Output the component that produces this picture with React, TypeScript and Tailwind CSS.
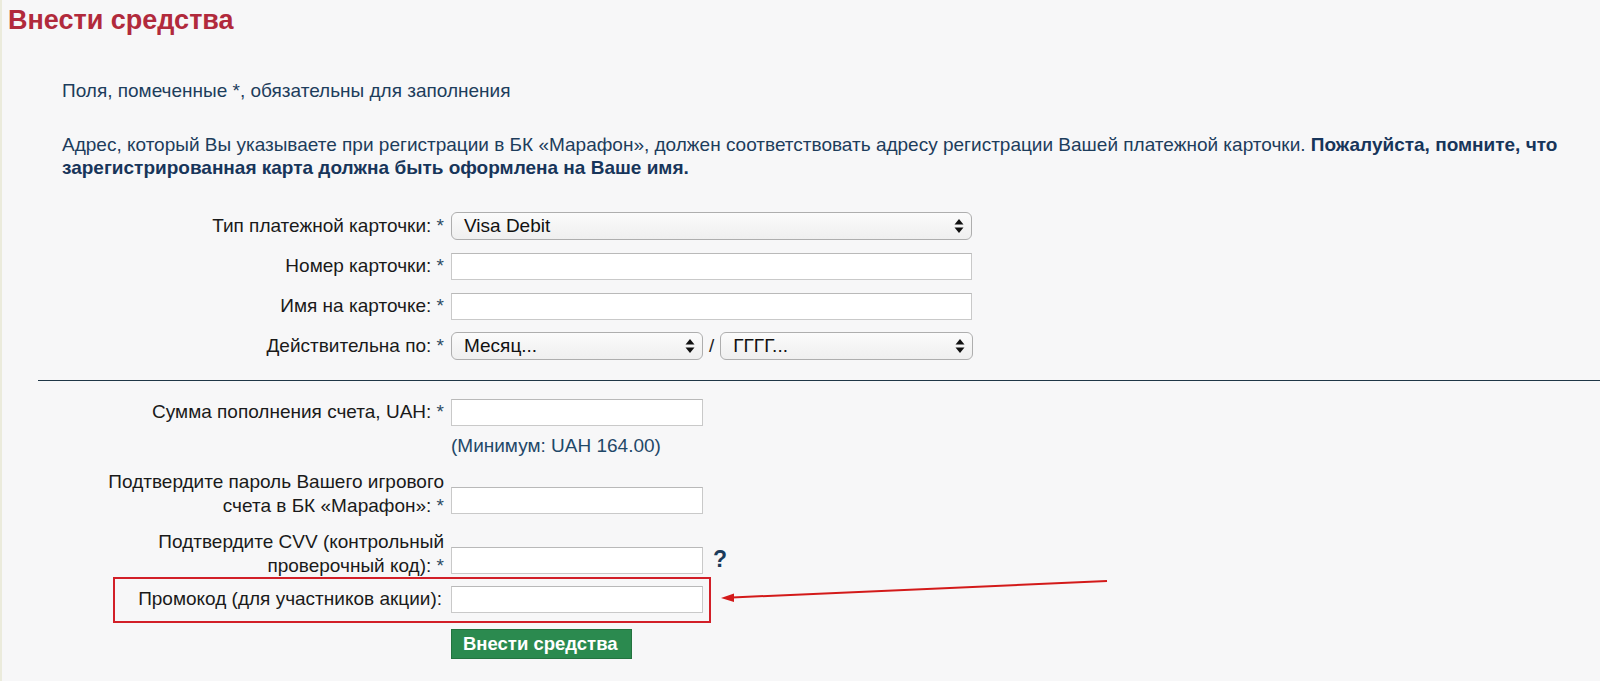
import React from "react";

const FONT = { fontFamily: '"Liberation Sans", Arial, Helvetica, sans-serif' };

function Star() {
  return <span className="text-[#2c4a63]"> *</span>;
}

function Arrows() {
  return (
    <svg width="10" height="16" viewBox="0 0 10 16" className="shrink-0">
      <path d="M5 1 L9.5 6.5 H0.5 Z" fill="#111" />
      <path d="M5 15 L9.5 9.5 H0.5 Z" fill="#111" />
    </svg>
  );
}

function FakeSelect({ value, width }: { value: string; width: string }) {
  return (
    <div
      className={`${width} h-[28px] flex items-center justify-between pl-[12px] pr-[7px] rounded-[6px] border border-[#aeaeae] bg-gradient-to-b from-[#fbfbfb] to-[#efefef] text-[19px] text-[#111]`}
    >
      <span>{value}</span>
      <Arrows />
    </div>
  );
}

function TextInput({ width, className = "" }: { width: string; className?: string }) {
  return (
    <input
      type="text"
      className={`${width} h-[27px] bg-white border border-[#c9c9c9] border-t-[#b9b9b9] outline-none ${className}`}
    />
  );
}

export default function App() {
  return (
    <div
      className="relative h-[681px] w-[1600px] overflow-hidden bg-[#f7f7f8] border-l-2 border-[#ebebdc]"
      style={FONT}
    >
      <h1 className="mt-[5px] pl-[6px] text-[27px] font-bold leading-[30px] text-[#b12a3c]">
        Внести средства
      </h1>

      <p className="mt-[44px] pl-[60px] text-[19px] leading-[23px] text-[#1d3d5c]">
        Поля, помеченные *, обязательны для заполнения
      </p>

      <p className="mt-[31px] pl-[60px] text-[19px] leading-[23px] text-[#1d3d5c] whitespace-nowrap">
        Адрес, который Вы указываете при регистрации в БК «Марафон», должен соответствовать адресу регистрации Вашей платежной карточки.{" "}
        <b className="text-[#17355a]">Пожалуйста, помните, что</b>
        <br />
        <b className="text-[#17355a]">зарегистрированная карта должна быть оформлена на Ваше имя.</b>
      </p>

      {/* card block */}
      <div className="mt-[33px] flex flex-col gap-[12px] text-[19px] text-[#1a1a1a]">
        <div className="flex items-center h-[28px]">
          <label className="w-[442px] text-right">
            Тип платежной карточки:<Star />
          </label>
          <div className="ml-[7px]">
            <FakeSelect value="Visa Debit" width="w-[521px]" />
          </div>
        </div>
        <div className="flex items-center h-[28px]">
          <label className="w-[442px] text-right">
            Номер карточки:<Star />
          </label>
          <TextInput width="w-[521px]" className="ml-[7px]" />
        </div>
        <div className="flex items-center h-[28px]">
          <label className="w-[442px] text-right">
            Имя на карточке:<Star />
          </label>
          <TextInput width="w-[521px]" className="ml-[7px]" />
        </div>
        <div className="flex items-center h-[28px]">
          <label className="w-[442px] text-right">
            Действительна по:<Star />
          </label>
          <div className="ml-[7px] flex items-center">
            <FakeSelect value="Месяц..." width="w-[252px]" />
            <span className="mx-[6px] text-[#222]">/</span>
            <FakeSelect value="ГГГГ..." width="w-[253px]" />
          </div>
        </div>
      </div>

      <div className="mt-[20px] ml-[36px] border-t-[1.5px] border-[#1f3646]" />

      {/* deposit block */}
      <div className="text-[19px] text-[#1a1a1a]">
        <div className="mt-[18px] flex items-center h-[27px]">
          <label className="w-[442px] text-right">
            Сумма пополнения счета, UAH:<Star />
          </label>
          <TextInput width="w-[252px]" className="ml-[7px]" />
        </div>
        <div className="mt-[8px] pl-[449px] leading-[23px] text-[#1f4868]">
          (Минимум: UAH 164.00)
        </div>

        <div className="mt-[13px] flex items-end">
          <label className="w-[442px] text-right leading-[23.5px]">
            Подтвердите пароль Вашего игрового
            <br />
            счета в БК «Марафон»:<Star />
          </label>
          <TextInput width="w-[252px]" className="ml-[7px] mb-[3px]" />
        </div>

        <div className="mt-[13px] flex items-end">
          <label className="w-[442px] text-right leading-[23.5px]">
            Подтвердите CVV (контрольный
            <br />
            проверочный код):<Star />
          </label>
          <TextInput width="w-[252px]" className="ml-[7px] mb-[3px]" />
          <span className="ml-[10px] mb-[5px] text-[23px] font-bold leading-[26px] text-[#1b3b5b]">?</span>
        </div>

        <div className="mt-[9px] flex items-center h-[27px]">
          <label className="w-[440px] text-right">Промокод (для участников акции):</label>
          <TextInput width="w-[252px]" className="ml-[9px]" />
        </div>

        <div className="mt-[16px] pl-[449px]">
          <button className="w-[181px] h-[30px] bg-[#2b8a4f] border border-[#23733f] text-white font-bold text-[18.5px] text-left pl-[11px]">
            Внести средства
          </button>
        </div>
      </div>

      {/* annotation: red frame and arrow */}
      <div className="absolute left-[111px] top-[577px] w-[598px] h-[46px] border-2 border-[#d21f28]" />
      <svg className="absolute left-0 top-0 pointer-events-none" width="1600" height="681">
        <line x1="1105" y1="581" x2="730" y2="597.5" stroke="#d31a1a" strokeWidth="2" />
        <path d="M719 598 L732 593.5 L732 602 Z" fill="#d31a1a" />
      </svg>
    </div>
  );
}
